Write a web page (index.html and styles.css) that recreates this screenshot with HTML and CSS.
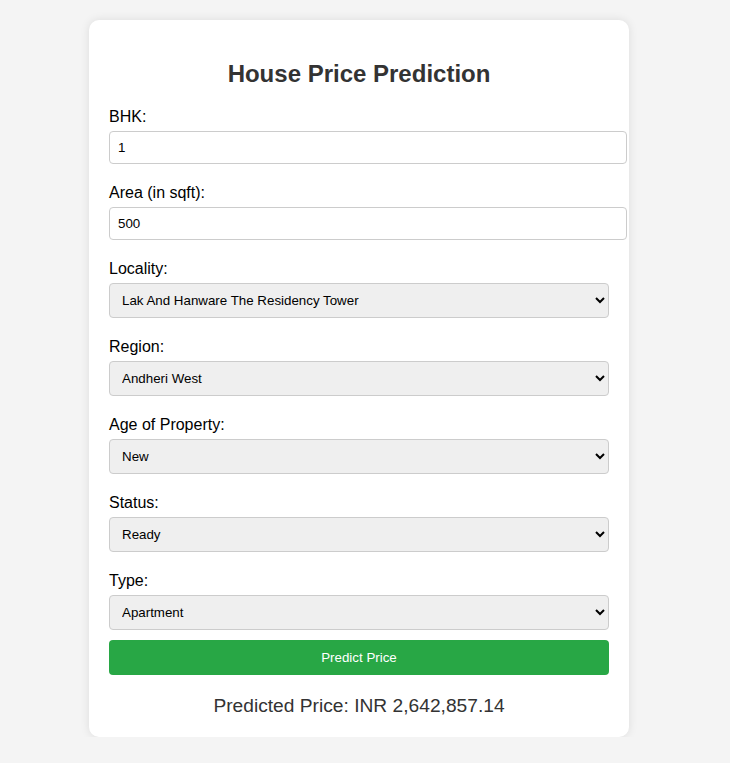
FILE: index.html
```html
<!DOCTYPE html>
<html lang="en">
<head>
<meta charset="utf-8">
<title>House Price Prediction</title>
<link rel="stylesheet" href="styles.css">
</head>
<body>
<div class="card">
  <h2 class="title">House Price Prediction</h2>
  <form class="form">
    <div class="field">
      <label class="label" for="bhk">BHK:</label>
      <input class="input" id="bhk" type="number" value="1">
    </div>
    <div class="field">
      <label class="label" for="area">Area (in sqft):</label>
      <input class="input" id="area" type="number" value="500">
    </div>
    <div class="field">
      <label class="label" for="locality">Locality:</label>
      <select class="select" id="locality"><option>Lak And Hanware The Residency Tower</option></select>
    </div>
    <div class="field">
      <label class="label" for="region">Region:</label>
      <select class="select" id="region"><option>Andheri West</option></select>
    </div>
    <div class="field">
      <label class="label" for="age">Age of Property:</label>
      <select class="select" id="age"><option>New</option></select>
    </div>
    <div class="field">
      <label class="label" for="status">Status:</label>
      <select class="select" id="status"><option>Ready</option></select>
    </div>
    <div class="field field-last">
      <label class="label" for="type">Type:</label>
      <select class="select" id="type"><option>Apartment</option></select>
    </div>
    <button class="button" type="button">Predict Price</button>
  </form>
  <div class="result">Predicted Price: INR 2,642,857.14</div>
</div>
</body>
</html>
```

FILE: styles.css
```css
html, body {
  margin: 0;
  padding: 0;
}
body {
  background: #f4f4f4;
  font-family: "Liberation Sans", Arial, sans-serif;
  padding-top: 20px;
  padding-left: 89px;
}
.card {
  width: 500px;
  padding: 20px;
  background: #fff;
  border-radius: 10px;
  box-shadow: 0 0 10px rgba(0, 0, 0, 0.1);
}
.title {
  text-align: center;
  color: #333;
  font-size: 24px;
  margin: 20px 0 20px;
  line-height: 28px;
}
.form {
  margin: 0;
}
.field {
  margin-bottom: 20px;
}
.field-last {
  margin-bottom: 10px;
}
.label {
  display: block;
  font-size: 16px;
  line-height: 18px;
  margin-bottom: 5px;
  color: #000;
}
.input {
  display: block;
  width: 100%;
  padding: 8px;
  border: 1px solid #ccc;
  border-radius: 4px;
  font-family: "Liberation Sans", Arial, sans-serif;
  font-size: 13.333px;
  margin: 0;
  background: #fff;
}
.select {
  display: block;
  width: 100%;
  padding: 8px;
  border: 1px solid #ccc;
  border-radius: 4px;
  font-family: "Liberation Sans", Arial, sans-serif;
  font-size: 13.333px;
  margin: 0;
  background-color: #efefef;
  color: #000;
}
.button {
  display: block;
  width: 100%;
  padding: 10px;
  border: none;
  border-radius: 4px;
  background: #28a745;
  color: #fff;
  font-family: "Liberation Sans", Arial, sans-serif;
  font-size: 13.333px;
  margin: 0;
}
.result {
  margin-top: 20px;
  text-align: center;
  color: #333;
  font-size: 19.2px;
  line-height: 22px;
}
```
